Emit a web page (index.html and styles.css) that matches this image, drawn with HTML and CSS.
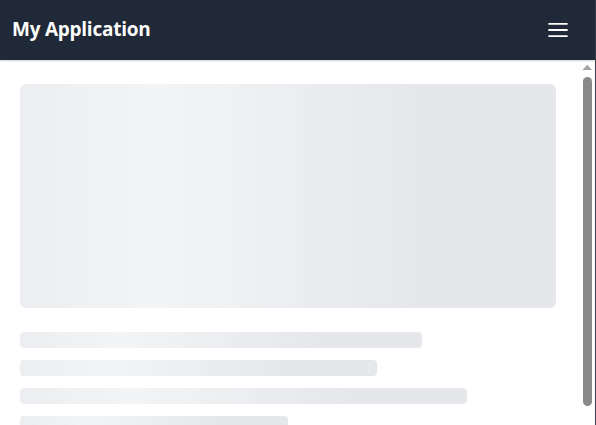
FILE: index.html
```html
<!DOCTYPE html>
<html lang="en">
<head>
<meta charset="utf-8">
<title>My Application</title>
<link rel="stylesheet" href="styles.css">
</head>
<body>
<div class="app">
  <header class="topbar">
    <h1 class="title">My Application</h1>
    <button class="menu-btn" aria-label="Menu">
      <svg width="28" height="28" viewBox="0 0 24 24" fill="none" stroke="currentColor" stroke-width="1.6" stroke-linecap="butt">
        <path d="M3.75 6.75h16.5M3.75 12h16.5M3.75 17.25h16.5"/>
      </svg>
    </button>
  </header>
  <div class="body-area">
    <main class="content">
      <div class="skeleton skeleton-media"></div>
      <div class="skeleton-lines">
        <div class="skeleton skeleton-line w-75"></div>
        <div class="skeleton skeleton-line w-66"></div>
        <div class="skeleton skeleton-line w-83"></div>
        <div class="skeleton skeleton-line w-50"></div>
      </div>
    </main>
    <div class="scrollbar" aria-hidden="true">
      <div class="scroll-btn">
        <svg width="15" height="15" viewBox="0 0 15 15"><path d="M2.5 10h9.5L7.25 4.8z" fill="#a3a3a3"/></svg>
      </div>
      <div class="scroll-track"><div class="scroll-thumb"></div></div>
      <div class="scroll-btn"></div>
    </div>
  </div>
</div>
</body>
</html>
```
FILE: styles.css
```css
* { box-sizing: border-box; }
html, body { margin: 0; height: 100%; }
body {
  font-family: "Open Sans", "Noto Sans", sans-serif;
  background: #ffffff;
  overflow: hidden;
}
.app {
  height: 100vh;
  display: flex;
  flex-direction: column;
  border-right: 1px solid #3b4150;
}
.topbar {
  flex: 0 0 60px;
  background: #1f2937;
  color: #ffffff;
  display: flex;
  align-items: center;
  justify-content: space-between;
  padding: 0 23px 0 12px;
  box-shadow: 0 1px 2px rgba(0,0,0,0.18);
  position: relative;
  z-index: 1;
}
.title {
  margin: 0;
  font-size: 19px;
  font-weight: 700;
  line-height: 1;
  letter-spacing: -0.25px;
  margin-top: -2px;
}
.menu-btn {
  background: none;
  border: 0;
  padding: 0;
  color: #ffffff;
  display: flex;
  cursor: pointer;
}
.body-area {
  flex: 1;
  min-height: 0;
  display: flex;
}
.content {
  flex: 1;
  min-width: 0;
  overflow: hidden;
  padding: 24px 24px 0 20px;
}
.scrollbar {
  flex: 0 0 15px;
  display: flex;
  flex-direction: column;
  background: #ffffff;
}
.scroll-btn {
  flex: 0 0 15px;
  display: flex;
}
.scroll-track {
  flex: 1;
  padding: 2px 3px 4px;
  display: flex;
}
.scroll-thumb {
  flex: 1;
  background: #8a8a8a;
  border-radius: 5px;
}
.skeleton {
  background: linear-gradient(90deg, #e5e7eb 25%, #f3f4f6 50%, #e5e7eb 75%);
  background-size: 200% 100%;
  background-position: 75% 0;
}
.skeleton-media {
  height: 224px;
  border-radius: 6px;
}
.skeleton-lines {
  margin-top: 24px;
  display: flex;
  flex-direction: column;
  gap: 12px;
}
.skeleton-line {
  height: 16px;
  border-radius: 4px;
}
.w-75 { width: 75%; }
.w-66 { width: 66.667%; }
.w-83 { width: 83.333%; }
.w-50 { width: 50%; }
```
